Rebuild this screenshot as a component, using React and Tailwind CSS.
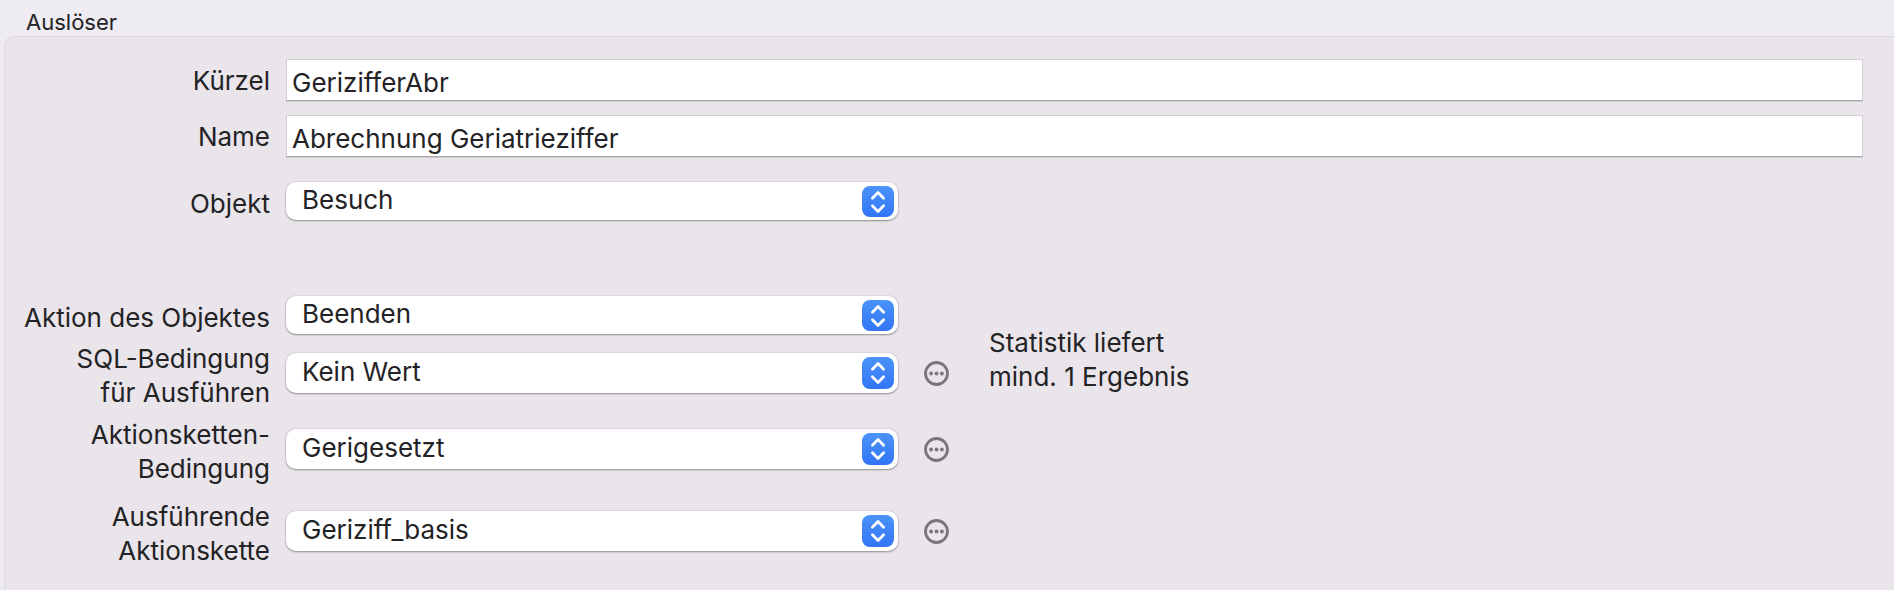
import { useState } from 'react';

const textFields = [
    { id: 'kuerzel', label: 'Kürzel', value: 'GerizifferAbr' },
    { id: 'name', label: 'Name', value: 'Abrechnung Geriatrieziffer' },
];

function TextRow({ id, label, value }) {
    const [text, setText] = useState(value);

    return (
        <div className="flex items-center gap-4">
            <label htmlFor={id} className="w-[253px] shrink-0 pt-0.5 text-right whitespace-nowrap">{label}</label>
            <input
                id={id}
                type="text"
                value={text}
                onChange={(e) => setText(e.target.value)}
                className="h-[42px] min-w-0 flex-1 border border-[#d3cfd5] border-b-[#a9a7ab] bg-white px-[5px] pt-1 shadow-[0_1px_0_#cdcad0] outline-none"
            />
        </div>
    );
}

function MoreButton({ label }) {
    return (
        <button type="button" aria-label={label} className="ml-[10px] shrink-0 text-[#79767a]">
            <svg width="25" height="25" viewBox="0 0 25 25" fill="none">
                <circle cx="12.5" cy="12.5" r="11" stroke="currentColor" strokeWidth="2.8" />
                <circle cx="7.1" cy="12.5" r="1.9" fill="currentColor" />
                <circle cx="12.5" cy="12.5" r="1.9" fill="currentColor" />
                <circle cx="17.9" cy="12.5" r="1.9" fill="currentColor" />
            </svg>
        </button>
    );
}

function SelectRow({ id, lines, value, more }) {
    // Zweizeilige Beschriftungen haben ein etwas höheres Auswahlfeld
    const tall = lines.length > 1;

    return (
        <div className={`flex items-center gap-4 ${tall ? '' : 'h-[38px]'}`}>
            <label htmlFor={id} className="w-[253px] shrink-0 pt-1.5 text-right whitespace-nowrap">
                {lines.map((line) => (
                    <span key={line} className="block">{line}</span>
                ))}
            </label>
            <div className={`relative w-[612px] shrink-0 ${tall ? 'h-10' : 'h-[38px]'}`}>
                <select
                    id={id}
                    defaultValue={value}
                    className="h-full w-full appearance-none rounded-[10px] bg-white pr-12 pb-0.5 pl-4 shadow-[0_0_1px_1px_rgba(0,0,0,0.05),0_1px_2px_rgba(0,0,0,0.35)] outline-none"
                >
                    <option>{value}</option>
                </select>
                <span className={`pointer-events-none absolute top-1 right-1 flex w-8 items-center justify-center rounded-lg bg-linear-to-b from-[#4b93f9] to-[#3275f6] ${tall ? 'h-8' : 'h-[31px]'}`}>
                    <svg width="16" height="24" viewBox="0 0 16 24" fill="none" stroke="#fff" strokeWidth="2.8" strokeLinecap="round" strokeLinejoin="round">
                        <path d="M2.4 8.2 8 2.6l5.6 5.6" />
                        <path d="M2.4 15.8 8 21.4l5.6-5.6" />
                    </svg>
                </span>
            </div>
            {more && <MoreButton label={`${lines.join(' ')} bearbeiten`} />}
        </div>
    );
}

export default function App() {
    return (
        <div className="flex min-h-screen flex-col bg-[#eeebf3] pl-1 font-['Inter',sans-serif] text-[26px] leading-[34px] text-[#232225]">
            <h1 className="pt-2 pl-[22px] text-[22px] leading-7">Auslöser</h1>
            <section className="flex-1 rounded-tl-[10px] border-t border-l border-[#dcd9e0] bg-[#e9e5ea] pt-[22px] pr-[31px] pl-3">
                <div className="flex flex-col gap-[14px]">
                    {textFields.map((field) => (
                        <TextRow key={field.id} {...field} />
                    ))}
                </div>

                <div className="mt-[25px]">
                    <SelectRow id="objekt" lines={['Objekt']} value="Besuch" />
                </div>

                <div className="mt-[76px] flex items-start gap-10">
                    <div className="flex flex-col gap-0.5">
                        <SelectRow id="aktion" lines={['Aktion des Objektes']} value="Beenden" />
                        <SelectRow id="sql" lines={['SQL-Bedingung', 'für Ausführen']} value="Kein Wert" more />
                        <SelectRow id="bedingung" lines={['Aktionsketten-', 'Bedingung']} value="Gerigesetzt" more />
                        <div className="pt-1.5">
                            <SelectRow id="kette" lines={['Ausführende', 'Aktionskette']} value="Geriziff_basis" more />
                        </div>
                    </div>
                    <p className="pt-[30px]">
                        Statistik liefert
                        <br />
                        mind. 1 Ergebnis
                    </p>
                </div>
            </section>
        </div>
    );
}
